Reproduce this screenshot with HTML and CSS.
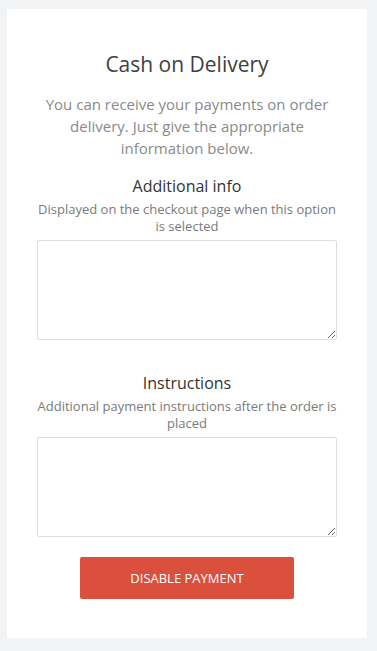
FILE: index.html
```html
<!DOCTYPE html>
<html lang="en">
<head>
    <meta charset="UTF-8">
    <meta name="viewport" content="width=device-width, initial-scale=1.0">
    <title>Cash on Delivery</title>
    <link rel="stylesheet" href="styles.css">
</head>
<body>
    <div class="card">
        <h1 class="title">Cash on Delivery</h1>
        <p class="intro">You can receive your payments on order delivery. Just give the appropriate information below.</p>

        <div class="field">
            <label class="field-label" for="info">Additional info</label>
            <div class="field-hint">Displayed on the checkout page when this option is selected</div>
            <textarea id="info" class="field-input"></textarea>
        </div>

        <div class="field">
            <label class="field-label" for="instructions">Instructions</label>
            <div class="field-hint">Additional payment instructions after the order is placed</div>
            <textarea id="instructions" class="field-input"></textarea>
        </div>

        <button class="btn-disable" type="button">Disable payment</button>
    </div>
</body>
</html>
```

FILE: styles.css
```css
body {
    font-family: "Open Sans", Arial, sans-serif;
    background-color: #f2f3f5;
    margin: 0;
    padding: 9px 10px 13px 7px;
}

.card {
    background: #fff;
    padding: 41px 30px 39px;
    display: flex;
    flex-direction: column;
    align-items: center;
    text-align: center;
}

.title {
    font-size: 21px;
    font-weight: normal;
    color: #3f3f3f;
    line-height: 28px;
    margin: 0 0 15px;
}

.intro {
    font-size: 15px;
    line-height: 22px;
    color: #8a8a8a;
    margin: 0 0 15px;
}

.field {
    width: 100%;
    display: flex;
    flex-direction: column;
    align-items: center;
    margin-bottom: 31px;
}

.field:last-of-type {
    margin-bottom: 20px;
}

.field-label {
    font-size: 16px;
    color: #333;
    line-height: 24px;
    margin-bottom: 3px;
}

.field-hint {
    font-size: 13px;
    color: #7a7a7a;
    line-height: 17px;
    margin-bottom: 5px;
}

.field-input {
    box-sizing: border-box;
    width: 100%;
    height: 100px;
    border: 1px solid #ddd;
    border-radius: 2px;
    resize: vertical;
    font-family: inherit;
}

.btn-disable {
    background-color: #db4f3d;
    color: #fff;
    border: none;
    border-radius: 2px;
    width: 214px;
    height: 42px;
    font-family: inherit;
    font-size: 13px;
    text-transform: uppercase;
    cursor: pointer;
}
```
